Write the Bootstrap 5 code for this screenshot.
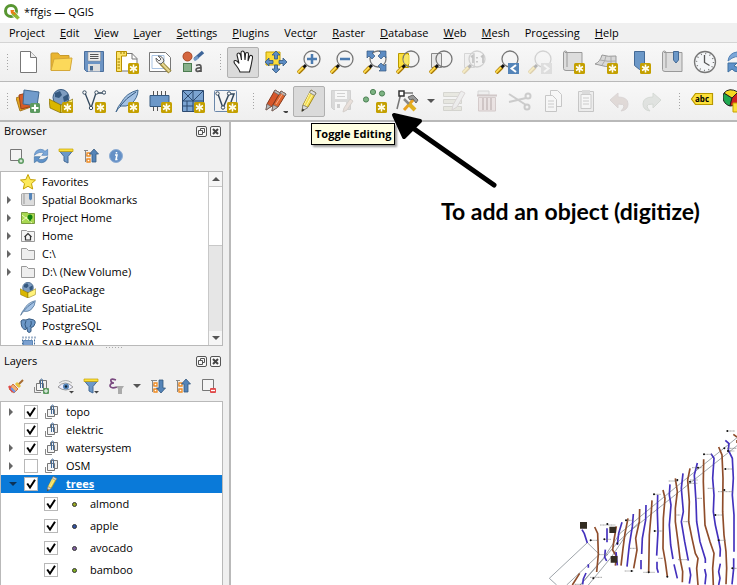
<!DOCTYPE html>
<html lang="en">
<head>
<meta charset="utf-8">
<meta name="viewport" content="width=device-width, initial-scale=1">
<title>*ffgis — QGIS</title>
<link href="https://cdn.jsdelivr.net/npm/bootstrap@5.3.0/dist/css/bootstrap.min.css" rel="stylesheet">
<style>
  :root { --edge: #b9b9b9; --face: #f0f0f0; }
  body { font: 11px/18px "Open Sans", "Noto Sans", sans-serif; color: #000; background: #fff; }
  button { color: inherit; }
  .titlebar { height: 23px; }
  .menubar { height: 20px; background: var(--face); border-bottom: 1px solid #d4d4d4; padding-left: 2px; gap: 1px; }
  .menubar button { border: 0; background: none; padding: 0 7px; }
  .toolstrip { height: 39px; gap: 1px; background: linear-gradient(#f8f8f8, #efefef); border-bottom: 1px solid var(--edge); overflow: hidden; }
  .toolstrip + .toolstrip { height: 40px; border-bottom-width: 2px; }
  .grip { width: 16px; height: 18px; flex: none; background: radial-gradient(circle, #a4a4a4 1px, transparent 1px) 0 0 / 3px 3px; background-clip: content-box; padding: 0 3px 0 8px; }
  .grip:first-child { width: 11px; padding: 0 1px 0 5px; }
  .tool { width: 32px; height: 31px; padding: 0; flex: none; display: flex; align-items: center; justify-content: center; border: 1px solid transparent; border-radius: 2px; background: none; }
  .tool svg { width: 24px; height: 24px; }
  .tool.held { background: #dadada; border-color: #b0b0b0; }
  .tool:disabled svg { opacity: .28; }
  .drop { width: 12px; height: 31px; padding: 0; border: 0; background: none; flex: none; }
  .tri { display: block; width: 0; height: 0; margin: auto; border: 4px solid transparent; border-top-color: #555; border-bottom: 0; }
  .tri.up { border-top: 0; border-bottom: 4px solid #555; }
  .tri.right { margin: 0; border: 4px solid transparent; border-left: 4px solid #666; border-right: 0; }
  .dock { width: 231px; background: var(--face); border-right: 2px solid var(--edge); }
  .dockhead { height: 18px; padding: 0 8px 0 4px; gap: 3px; }
  .dockhead h2 { font-size: 11px; line-height: 18px; }
  .dockhead button { width: 11px; height: 11px; padding: 0; border: 0; background: none; line-height: 0; }
  .dockhead svg { width: 11px; height: 11px; }
  .mini { height: 31px; padding-left: 8px; gap: 9px; }
  .mini button { width: 16px; height: 16px; padding: 0; border: 0; background: none; line-height: 0; }
  .mini svg { width: 16px; height: 16px; overflow: visible; }
  .mini .drop { width: 8px; }
  .pane { background: #fff; border: 1px solid var(--edge); margin-right: 6px; overflow: hidden; }
  .browsepane { height: 175px; }
  .rows { padding-top: 1px; }
  .branch { height: 18px; white-space: nowrap; }
  .branch .twist { width: 13px; flex: none; padding-left: 6px; }
  .browsepane .branch svg { width: 16px; height: 16px; margin: 0 6px; flex: none; }
  .scroller { width: 14px; border-left: 1px solid #c8c8c8; background: #e6e6e6; }
  .scroller button { height: 14px; padding: 0; border: 0; background: #f6f6f6; }
  .scroller i { height: 60px; background: #fff; border: 1px solid #c8c8c8; border-width: 1px 0; }
  .splitter { height: 6px; width: 122px; background: radial-gradient(circle, #aaa 1px, transparent 1px) 0 0 / 3px 3px; background-clip: content-box; padding: 1px 0 2px 105px; }
  .layerpane .twist { width: 23px; padding-left: 8px; }
  .layerpane svg { width: 16px; height: 16px; margin: 0 6px; flex: none; }
  .layerpane input { appearance: none; width: 14px; height: 14px; margin: 0; flex: none; border: 1px solid #b8b8b8; background: #fff; }
  .layerpane input:checked { background: #fff url("data:image/svg+xml,%3Csvg xmlns='http://www.w3.org/2000/svg' viewBox='0 0 12 12'%3E%3Cpath d='M2.2 5.5l2.8 4L10 1.8' fill='none' stroke='%23000' stroke-width='2'/%3E%3C/svg%3E"); }
  .branch.chosen { background: #0a7ad9; color: #fff; }
  .chosen .tri { border-top-color: #0b3358; }
  .leaf { height: 22px; padding-left: 43px; }
  .leaf .dot { width: 5px; height: 5px; border: 1px solid #333; border-radius: 50%; margin: 0 13px 0 14px; }
  .olive { background: #98a820; } .navy { background: #3050a0; } .violet { background: #8060a0; } .green { background: #80b020; }
  .canvas { background: #fff; overflow: visible; }
  .canvas svg { position: absolute; }
  .contours { right: 0; bottom: 0; width: 197px; height: 160px; }
  .pointer { left: 159px; top: -11px; width: 110px; height: 80px; }
  .hint { position: absolute; left: 80px; top: 1px; height: 22px; padding: 0 3px; border: 1px solid #000; background: #ffffe1; font-weight: 700; line-height: 20px; box-shadow: 2px 2px 2px #0006; white-space: nowrap; z-index: 2; }
  .note { position: absolute; left: 210px; top: 75px; font: 700 23px/28px Lato, "Open Sans", sans-serif; white-space: nowrap; }
</style>
<script src="https://cdn.jsdelivr.net/npm/bootstrap@5.3.0/dist/js/bootstrap.bundle.min.js"></script>
</head>
<body class="vh-100 overflow-hidden d-flex flex-column">
<svg class="d-none" aria-hidden="true">
  <defs>
    <linearGradient id="glass" x2="1" y2="1"><stop stop-color="#fff"/><stop offset="1" stop-color="#ccc"/></linearGradient>
    <linearGradient id="sky" x2="1" y2="1"><stop stop-color="#e8eef6"/><stop offset="1" stop-color="#7ba0c8"/></linearGradient>
  </defs>
  <symbol id="star" viewBox="0 0 24 24"><rect x="13" y="13" width="11" height="11" rx="1.500" fill="#c4a000"/><path d="M18.500 14.500v8M15 16.500l7 4M22 16.500l-7 4" stroke="#fff" stroke-width="1.500"/><circle cx="18.500" cy="18.500" r="2" fill="#fffbe0"/></symbol>
  <symbol id="lens" viewBox="0 0 24 24"><path d="M1 23l6-6" stroke="#a87800" stroke-width="4"/><path d="M1 22.500l6-6" stroke="#fcd94c" stroke-width="2"/><path d="M6.500 17.500l2.500-2.500" stroke="#111" stroke-width="3"/><circle cx="15" cy="9" r="8" fill="url(#glass)" fill-opacity=".85" stroke="#777" stroke-width="1.300"/></symbol>
  <symbol id="doc" viewBox="0 0 24 24"><path d="M4.500 1.500h10l6 6v15h-16z" fill="#fff" stroke="#777"/><path d="M14.500 1.500v6h6" fill="#eee" stroke="#777"/></symbol>
  <symbol id="open" viewBox="0 0 24 24"><path d="M2 20V4q0-1 1-1h6l2 2.500h9V9" fill="#eab530" stroke="#c79b2c"/><path d="M2 20.500L5 9l18-1-2 12.500z" fill="#fcd95a" stroke="#d5a838"/></symbol>
  <symbol id="save" viewBox="0 0 24 24"><path d="M2.500 1.500h19v20h-17l-2-2z" fill="#6c94c4" stroke="#4b6f9c"/><path d="M6 2h12.500v9H6z" fill="#eee" stroke="#888" stroke-width=".5"/><path d="M8 4.500h8.500M8 6.500h8.500M8 8.500h8.500" stroke="#555"/><path d="M6 14h12v7.500H6z" fill="#ddd"/><path d="M8 16h3v4.500H8z" fill="#46688f"/></symbol>
  <symbol id="layout" viewBox="0 0 24 24"><path d="M4 3.500h13l5 5V21H4z" fill="#fff" stroke="#777"/><path d="M17 3v6h5" fill="none" stroke="#777"/><path d="M1.500 1.500h10V6h-5v15.500h-5z" fill="#fce36a" stroke="#b89000"/><path d="M5 9H2.500M5 12H2.500M5 15H2.500M5 18H2.500M6 2v2M9 2v2" stroke="#9a7a00"/><use href="#star"/></symbol>
  <symbol id="manager" viewBox="0 0 24 24"><path d="M1.500 2.500h16l5 5v14h-21z" fill="#fff" stroke="#777"/><path d="M4 5.500h12v13H4z" fill="none" stroke="#a9c3e2"/><path d="M13 13l9 9" stroke="#9b8a40" stroke-width="4.500"/><path d="M13.500 13l8 8.500" stroke="#e8d890" stroke-width="2"/><path d="M8 8q0 5 5 6l3-3q-1-5-6-5l3 3-2 2z" fill="#eee" stroke="#666"/></symbol>
  <symbol id="style" viewBox="0 0 24 24"><circle cx="6.500" cy="6.500" r="4.500" fill="#d4663e" stroke="#a84522"/><path d="M14 9l8-7" stroke="#3d6599" stroke-width="3.500"/><path d="M13 10l4-3" stroke="#739bc8" stroke-width="3"/><rect x="2.500" y="13.500" width="8" height="8" fill="#88b08a" stroke="#4c7c50"/><path d="M15 15.500q5-2 5 1.500v5M20 18q-5-.5-5 2 0 2.500 5 .5" fill="none" stroke="#555" stroke-width="1.700"/></symbol>
  <symbol id="hand" viewBox="0 0 24 24"><path d="M9 22q-1-3-5-8-2-3 0-3.500 2-.5 4 3L6 5q0-2 1.500-2T9.500 5l1 5-.5-7q0-2 1.500-2T13.500 3l.5 7 .5-6q0-1.500 1.500-1.500T17.500 4l-.5 7 1.500-4.500q.5-1.500 2-1T21.500 8l-1.500 8-1.500 6z" fill="#fff" stroke="#222" stroke-width="1.100"/></symbol>
  <symbol id="pan" viewBox="0 0 24 24"><path d="M2 2h14v13H2z" fill="#fcdc3a" stroke="#c4a000"/><path d="M12 1l4 4h-2.500v4h-3V5H8zM12 23l-4-4h2.500v-4h3v4H16zM1 12l4-4v2.500h4v3H5V16zM23 12l-4 4v-2.500h-4v-3h4V8z" fill="#5c8cc4" stroke="#34587f" stroke-width=".8"/></symbol>
  <symbol id="zin" viewBox="0 0 24 24"><use href="#lens"/><path d="M15 4v10M10 9h10" stroke="#4b7bb0" stroke-width="2.500"/></symbol>
  <symbol id="zout" viewBox="0 0 24 24"><use href="#lens"/><path d="M10 9h10" stroke="#4b7bb0" stroke-width="2.500"/></symbol>
  <symbol id="zfull" viewBox="0 0 24 24"><use href="#lens"/><path d="M4 1h7L9 3l3 3-3 3-3-3-2 2zM23 1v7l-2-2-3 3-3-3 3-3-2-2zM23 21h-7l2-2-3-3 3-3 3 3 2-2z" fill="#5c8cc4" stroke="#34587f" stroke-width=".7"/></symbol>
  <symbol id="zsel" viewBox="0 0 24 24"><path d="M2.500 3.500h10v14h-10z" fill="#fce03a" stroke="#b89800"/><use href="#lens"/><path d="M9 5h5v9H9q-3-4 0-9z" fill="#f6e870" opacity=".8"/></symbol>
  <symbol id="zlayer" viewBox="0 0 24 24"><path d="M2.500 3.500h10v14h-10z" fill="#e8e8e8" stroke="#888"/><use href="#lens"/></symbol>
  <symbol id="znative" viewBox="0 0 24 24"><path d="M2.500 3.500h10v14h-10z" fill="#e8e8e8" stroke="#888"/><use href="#lens"/><path d="M9 7l2-1.500V13M21 13V5.500L19 7M15 7v1.500M15 11v1.500" fill="none" stroke="#444" stroke-width="1.700"/></symbol>
  <symbol id="zlast" viewBox="0 0 24 24"><use href="#lens"/><path d="M13 13h11v11H13z" fill="#5484b8"/><path d="M21 15l-4.500 3.500L21 22" fill="none" stroke="#fff" stroke-width="2"/></symbol>
  <symbol id="znext" viewBox="0 0 24 24"><use href="#lens"/><path d="M13 13h11v11H13z" fill="#aaa"/><path d="M16 15l4.500 3.500L16 22" fill="none" stroke="#fff" stroke-width="2"/></symbol>
  <symbol id="newmap" viewBox="0 0 24 24"><path d="M4 2.500h17v18H5q-2.500 0-2.500-2V3q0-2 2-2 1.500 0 1.500 2v14" fill="#ddd" stroke="#999"/><use href="#star"/></symbol>
  <symbol id="new3d" viewBox="0 0 24 24"><path d="M1 14q5-2 7-9 6 2 14 1v10q-10 2-21-2z" fill="#d8d8d8" stroke="#999"/><path d="M6 10q8 2 16 1M12 6q-1 6-4 9M17 6v10" fill="none" stroke="#aaa"/><use href="#star"/></symbol>
  <symbol id="newmark" viewBox="0 0 24 24"><path d="M7.500 1.500h10v19l-5-1-5-4z" fill="#6c98c8" stroke="#446a96"/><use href="#star"/></symbol>
  <symbol id="marks" viewBox="0 0 24 24"><path d="M4 2.500h18v19H5q-2.500 0-2.500-2V3q0-2 2-2 1.500 0 1.500 2v15" fill="#ddd" stroke="#999"/><path d="M13.500 1.500h5V10L16 13l-2.500-3z" fill="#6c98c8" stroke="#446a96"/></symbol>
  <symbol id="clock" viewBox="0 0 24 24"><circle cx="12" cy="12" r="10.500" fill="#f4f6f8" stroke="#777" stroke-width="1.300"/><circle cx="12" cy="12" r="8.500" fill="none" stroke="#777" stroke-width="1.500" stroke-dasharray="1 3.450"/><path d="M11.500 5v7.500l5 3" fill="none" stroke="#555" stroke-width="1.300"/></symbol>
  <symbol id="reload" viewBox="0 0 24 24"><path d="M2 11Q3 3 11 2q5 0 7 3l4-3v9h-9l3-3q-6-4-14 3z" fill="#7ba7d8" stroke="#4f7fb5"/><path d="M22 13q-1 8-9 9-5 0-7-3l-4 3v-9h9l-3 3q6 4 14-3z" fill="#5f92ca" stroke="#41719f"/></symbol>
  <symbol id="sources" viewBox="0 0 24 24"><path d="M0 9l10-4 5 13-11 4z" fill="#e5a820" stroke="#a97a20"/><path d="M3 6l11-3 3 14-12 3z" fill="#d55c28" stroke="#9d4219"/><path d="M8 1l15 2-2 14-14-2z" fill="#719bcb" stroke="#426890"/><rect x="14" y="14" width="10" height="10" rx="1.500" fill="#5c9a60"/><path d="M19 15.500v7M15.500 19h7" stroke="#fff" stroke-width="2"/></symbol>
  <symbol id="gpkg" viewBox="0 0 24 24"><circle cx="12" cy="8.500" r="8" fill="#7d9cc0" stroke="#34587f"/><path d="M6 4l5-2 2 4-3 3-4-1zM14 8l5-3v6l-4 2z" fill="#34587f"/><path d="M0 10l12 6v8L1 19z" fill="#d9b600" stroke="#806a00" stroke-width=".7"/><path d="M24 10l-12 6v8l11-5z" fill="#fff27a" stroke="#806a00" stroke-width=".7"/></symbol>
  <symbol id="newgpkg" viewBox="0 0 24 24"><use href="#gpkg"/><use href="#star"/></symbol>
  <symbol id="vee" viewBox="0 0 24 24"><path d="M3 4l6 15 5-15h8" fill="none" stroke="#34495e" stroke-width="1.300"/><g fill="#fff" stroke="#34495e"><circle cx="2.500" cy="3.500" r="1.700"/><circle cx="9" cy="19" r="1.700"/><circle cx="14.500" cy="3.500" r="1.700"/><circle cx="22" cy="3.500" r="1.700"/></g></symbol>
  <symbol id="newshp" viewBox="0 0 24 24"><use href="#vee"/><use href="#star"/></symbol>
  <symbol id="feather" viewBox="0 0 24 24"><path d="M1 23q2-6 5-9Q11 4 23 1q0 8-7 14-5 3-10 2-3 2-5 6z" fill="#a4c2e4" stroke="#446a90"/><path d="M5 17Q11 9 21 3" fill="none" stroke="#34587f"/></symbol>
  <symbol id="newlite" viewBox="0 0 24 24"><use href="#feather"/><use href="#star"/></symbol>
  <symbol id="chip" viewBox="0 0 24 24"><path d="M5.500 2v20M9.500 2v20M13.500 2v20M17.500 2v20" stroke="#555"/><path d="M2 6.500h19v11H2z" fill="#6c98c8" stroke="#34587f"/></symbol>
  <symbol id="newchip" viewBox="0 0 24 24"><use href="#chip"/><use href="#star"/></symbol>
  <symbol id="mesh" viewBox="0 0 24 24"><path d="M1.500 1.500h21v21h-21z" fill="#7ba4d2" stroke="#2c4a70"/><path d="M12 1v22M1 12h22M2 2l10 10L22 2M2 12L12 2M2 17h10M6 12v10" fill="none" stroke="#2c4a70"/><use href="#star"/></symbol>
  <symbol id="virtual" viewBox="0 0 24 24"><rect x=".5" y="1.500" width="22" height="21" rx="1" fill="url(#sky)" stroke="#6a87aa"/><path d="M4 5l5 14L15 5h5l-3 8" fill="none" stroke="#34495e" stroke-width="1.500"/><g fill="#fff" stroke="#34495e"><circle cx="3.500" cy="4.500" r="1.700"/><circle cx="9" cy="18.500" r="1.700"/><circle cx="15" cy="4.500" r="1.700"/></g><use href="#star"/></symbol>
  <symbol id="pencil" viewBox="0 0 24 24"><path d="M5 22l1-6L14 1l5 3-8 14z" fill="#f3dc50" stroke="#a48b20"/><path d="M13.500 2.500L7 16M16.500 3.500L9 17" stroke="#fff6a8"/><path d="M14 1l5 3-1.500 2.500-5-3zM5 22l1-6 5 2.500z" fill="#ddd" stroke="#777" stroke-width=".8"/><path d="M4.500 23l1-3.500 2 1.500z" fill="#333"/></symbol>
  <symbol id="edits" viewBox="0 0 24 24"><path d="M2 21l1-6L11 1l5 3-8 13z" fill="#d6562a" stroke="#86391c"/><path d="M8 22l1-6 8-14 5 3-8 13z" fill="#e0662f" stroke="#86391c"/><path d="M11 1l5 3-1 2-5-3zM17 2l5 3-1 2-5-3zM2 21l1-6 4 2.500zM8 22l1-6 5 2z" fill="#bbb" stroke="#666" stroke-width=".7"/><path d="M12 15l7-11" stroke="#f8a888"/><path d="M19 22h6l-3 3z" fill="#444"/></symbol>
  <symbol id="saveedits" viewBox="0 0 24 24"><path d="M1.500 1.500h19v19h-17l-2-2z" fill="#999" stroke="#777"/><path d="M5 2h12v8H5zM5 13h11v8H5z" fill="#fff"/><path d="M7 4.500h8M7 7.500h8" stroke="#777"/><path d="M7 15h3v4H7z" fill="#777"/><path d="M13 23l1-4 6-9 3 2-6 9z" fill="#d0b0a0" stroke="#876"/></symbol>
  <symbol id="addpt" viewBox="0 0 24 24"><g fill="#7db383" stroke="#4e8256"><circle cx="3" cy="10.500" r="2.600"/><circle cx="10" cy="3" r="2.600"/><circle cx="19" cy="4.500" r="2.600"/></g><use href="#star"/></symbol>
  <symbol id="vertex" viewBox="0 0 24 24"><path d="M1 20L5 4h12" fill="none" stroke="#777" stroke-width="1.500"/><path d="M3 2h5v5H3z" fill="#fff" stroke="#333" stroke-width="1.500"/><path d="M8 21L18 10" stroke="#e8a020" stroke-width="3"/><path d="M12 8l5-2 5 5-2 3-3-4-3 1z" fill="#999" stroke="#666"/><path d="M8 10l5 5" stroke="#888" stroke-width="2.500"/><path d="M13 15l6 6" stroke="#e0b020" stroke-width="4"/></symbol>
  <symbol id="attrs" viewBox="0 0 24 24"><path d="M1.500 3.500h18v4h-18zM1.500 10.500h18v4h-18zM1.500 17.500h18v4h-18z" fill="#c8c8b0" stroke="#887"/><path d="M10 21l1-5 8-14 4 2-8 14z" fill="#ddd" stroke="#988"/></symbol>
  <symbol id="bin" viewBox="0 0 24 24"><path d="M3 2h11v4H3z" fill="#ddd" stroke="#888"/><path d="M3.500 8.500h17V22h-17z" fill="#d6bcbc" stroke="#866"/><path d="M2 6.500h20M8 9v12M12 9v12M16 9v12" stroke="#755" stroke-width="2"/></symbol>
  <symbol id="cut" viewBox="0 0 24 24"><path d="M1 5l17 11M1 13l17-4" stroke="#666" stroke-width="2"/><g fill="none" stroke="#666" stroke-width="2"><circle cx="20" cy="7" r="2.500"/><circle cx="19" cy="18" r="2.500"/></g></symbol>
  <symbol id="copy" viewBox="0 0 24 24"><path d="M9.500 1.500h7l4 4v12h-11z" fill="#fff" stroke="#555"/><path d="M4.500 6.500h7l4 4v12h-11z" fill="#fff" stroke="#555"/><path d="M7 12h6M7 15h6M7 18h6" stroke="#666"/></symbol>
  <symbol id="paste" viewBox="0 0 24 24"><path d="M4.500 2.500h15v20h-15z" fill="#ddd" stroke="#555"/><path d="M7 5.500h10v14H7z" fill="#fff" stroke="#666"/><path d="M8 1h8v4H8z" fill="#999"/><path d="M9 9h6M9 12h6M9 15h6" stroke="#666"/></symbol>
  <symbol id="undo" viewBox="0 0 24 24"><path d="M3 11l8-7v4q10 0 10 7 0 6-7 7 3-3 3-5t-6-2v4z" fill="#b09890" stroke="#988"/></symbol>
  <symbol id="redo" viewBox="0 0 24 24"><path d="M21 11l-8-7v4Q3 8 3 15q0 6 7 7-3-3-3-5t6-2v4z" fill="#b0b8b0" stroke="#898"/></symbol>
  <symbol id="tag" viewBox="0 0 24 24"><path d="M1.500 10l4-5.500h17v11h-17z" fill="#fce03a" stroke="#b89800" stroke-width="1.200"/><text x="5" y="12.500" font-family="Open Sans" font-size="8" font-weight="700">abc</text></symbol>
  <symbol id="pie" viewBox="0 0 24 24"><path d="M9 9L1 4a9 9 0 0 0 6 13z" fill="#20a850" stroke="#222"/><path d="M9 9L1 4q5-6 14-1z" fill="#f4d820" stroke="#222"/><path d="M9 9l6-6q5 6 0 13l-8 1z" fill="#d02020" stroke="#222"/><path d="M10 14h5v9h-5z" fill="#fce03a" stroke="#c4a000"/></symbol>
  <symbol id="float" viewBox="0 0 11 11"><rect x=".5" y=".5" width="10" height="10" rx="1.500" fill="#f8f8f8" stroke="#555"/><path d="M4.500 4.500V2.500h4v4h-2M2.500 4.500h4v4h-4z" fill="none" stroke="#555"/></symbol>
  <symbol id="shut" viewBox="0 0 11 11"><rect x=".5" y=".5" width="10" height="10" rx="1.500" fill="#f8f8f8" stroke="#555"/><path d="M3 3l5 5M8 3L3 8" stroke="#444" stroke-width="2"/></symbol>
  <symbol id="boxplus" viewBox="0 0 16 16"><path d="M2.500 1.500h11v11h-11z" fill="#f4f4f4" stroke="#777"/><circle cx="13" cy="13" r="3" fill="#5c9a60"/><path d="M13 11.500v3M11.500 13h3" stroke="#fff"/></symbol>
  <symbol id="boxminus" viewBox="0 0 16 16"><path d="M2.500 1.500h11v11h-11z" fill="#f4f4f4" stroke="#777"/><rect x="10" y="10" width="6" height="5" rx="1" fill="#e04848"/><path d="M11 12.500h4" stroke="#fff" stroke-width="1.300"/></symbol>
  <symbol id="funnel" viewBox="0 0 16 16"><path d="M1.500 3h13L10 8.500V15l-4-2V8.500z" fill="#6c98c8" stroke="#446a96"/><path d="M1 1h14v2.500H1z" fill="#fce03a" stroke="#c4a000" stroke-width=".7"/></symbol>
  <symbol id="collapse" viewBox="0 0 16 16"><path d="M1 2.500h4M2.500 2v12M2.500 7h3M2.500 12h3" stroke="#888" fill="none"/><path d="M4 5h3v3H4zM4 11h3v3H4z" fill="#fff" stroke="#f08a20" stroke-width="1.300"/><path d="M11 1l4.500 5H13v8H9V6H6.500z" fill="#5484b8" stroke="#34587f" stroke-width=".8"/></symbol>
  <symbol id="expand" viewBox="0 0 16 16"><path d="M1 2.500h6M2.500 2v12M2.500 7h3M2.500 12h3" stroke="#888" fill="none"/><path d="M4 5h3v3H4zM4 11h3v3H4z" fill="#fff" stroke="#f08a20" stroke-width="1.300"/><path d="M11 15l-4.500-5H9V2h4v8h2.500z" fill="#5484b8" stroke="#34587f" stroke-width=".8"/></symbol>
  <symbol id="info" viewBox="0 0 16 16"><circle cx="8" cy="8" r="6.500" fill="#6590c6" stroke="#8faed4"/><path d="M7 7h2l-1 4.500h1.500M8.500 4v1.500" fill="none" stroke="#fff" stroke-width="1.500"/></symbol>
  <symbol id="brush" viewBox="0 0 16 16"><path d="M15 2L9 8" stroke="#a86c30" stroke-width="2"/><path d="M5 6l5 5-4 4-5-4z" fill="#f4b070" stroke="#cf7040"/><path d="M1 8l4 6" stroke="#e04848" stroke-width="2.500"/><path d="M3 10l4 4" stroke="#6c98e8" stroke-width="2"/><path d="M8 5l4 4" stroke="#e8c440" stroke-width="3"/></symbol>
  <symbol id="group" viewBox="0 0 16 16"><path d="M6.500 2.500h7v8h-7z" fill="#eee" stroke="#777"/><path d="M3.500 5.500h7v7h-7z" fill="#f4f4f4" stroke="#777"/><path d="M1.500 9v5.500H8" fill="none" stroke="#888"/><path d="M7.500 10V2.500q0-1.500 1-1.500t1 1.500V10" fill="none" stroke="#446a96"/></symbol>
  <symbol id="addgroup" viewBox="0 0 16 16"><use href="#group"/><rect x="10" y="10" width="6" height="6" rx="1" fill="#5c9a60"/><path d="M13 11v4M11 13h4" stroke="#fff"/></symbol>
  <symbol id="eye" viewBox="0 0 16 16"><path d="M0 9q7-8 15 0-7 6-15 0z" fill="#eef" stroke="#999"/><circle cx="8" cy="8.500" r="3" fill="#5484b8"/><circle cx="8" cy="8.500" r="1.200" fill="#123"/><path d="M1 5q7-5 13 0" fill="none" stroke="#aaa"/><path d="M11 13h5l-2.500 2.500z" fill="#444"/></symbol>
  <symbol id="filterleg" viewBox="0 0 16 16"><use href="#funnel"/><path d="M11 13h5l-2.500 2.500z" fill="#444"/></symbol>
  <symbol id="expr" viewBox="0 0 16 16"><path d="M8 2Q2 0 3 3q0 2 3 2-4 0-4 3 1 3 7 1" fill="none" stroke="#7a4a80" stroke-width="1.700"/><path d="M8 8h8l-2 3v5h-4v-5z" fill="#aaa"/></symbol>
  <symbol id="fav" viewBox="0 0 16 16"><path d="M8 .5l2.200 5 5.300.5-4 3.600 1.200 5.400L8 12.300 3.300 15l1.200-5.400L.5 6l5.300-.5z" fill="#fce95a" stroke="#c4a000"/></symbol>
  <symbol id="bmark" viewBox="0 0 16 16"><path d="M2.500 1.500h12v12H3q-1.500 0-1.500-1.500V2z" fill="#ddd" stroke="#aaa"/><path d="M4 2v10" stroke="#999"/><path d="M9 1h3v6l-1.500 1.500L9 7z" fill="#5484b8"/></symbol>
  <symbol id="projhome" viewBox="0 0 16 16"><path d="M1.500 2.500h6l1 1h6v10h-13z" fill="#a8d850" stroke="#7a9a40"/><path d="M2 5l10 8M2 11l5-4" stroke="#eef8c0"/><circle cx="10" cy="7" r="2.500" fill="#108010"/><path d="M8.500 8.500h3L10 12z" fill="#108010"/></symbol>
  <symbol id="home" viewBox="0 0 16 16"><path d="M1.500 2.500h5l1 1h7v10h-13z" fill="#f4f4f4" stroke="#999"/><path d="M4.500 9L8 5.500 11.500 9M5.500 8.500v3.500h5V8.500" fill="none" stroke="#333" stroke-width="1.200"/></symbol>
  <symbol id="folder" viewBox="0 0 16 16"><path d="M1.500 13.500v-11h5l2 2h6v9z" fill="#eee" stroke="#999"/></symbol>
  <symbol id="elephant" viewBox="0 0 16 16"><path d="M1 3q1-2 5-1 3-2 6-.500 4 .5 3 4-1 4-4 4v4q-2 2-3.500 0l-.5-4-1 2Q1 12 1 3z" fill="#6c98c8" stroke="#34587f"/><path d="M6 3q-2 3 0 7M11 3q1 3-1 6" fill="none" stroke="#34587f"/></symbol>
  <symbol id="hana" viewBox="0 0 16 16"><path d="M2.500 1.500h13M2 4.500h14M2 7.500h14M2 10.500h14" stroke="#446a96" stroke-width="2" stroke-dasharray="1 2"/><path d="M3.500 4.500h9v9h-9z" fill="#7ba0d0" stroke="#5c88b8"/></symbol>
</svg>

<header class="titlebar d-flex align-items-center flex-shrink-0">
  <svg class="ms-1 me-1" width="16" height="16" viewBox="0 0 16 16" aria-hidden="true"><circle cx="7" cy="7" r="5.500" fill="none" stroke="#589632" stroke-width="3"/><path d="M7.500 7.500h3.500l5 6-2.500 2.500-6-5z" fill="#8fb832" stroke="#fff" stroke-width=".7"/><path d="M6.500 6h4l-1 1.500L12 10l-1.500 1L8.500 9 7 10z" fill="#ee7913"/></svg>
  <span>*ffgis — QGIS</span>
</header>

<nav class="menubar d-flex align-items-center flex-shrink-0" aria-label="Main menu">
  <button>Pro<u>j</u>ect</button><button><u>E</u>dit</button><button><u>V</u>iew</button><button><u>L</u>ayer</button><button><u>S</u>ettings</button><button><u>P</u>lugins</button><button>Vect<u>o</u>r</button><button><u>R</u>aster</button><button><u>D</u>atabase</button><button><u>W</u>eb</button><button><u>M</u>esh</button><button>Pro<u>c</u>essing</button><button><u>H</u>elp</button>
</nav>

<div class="toolstrip d-flex align-items-center flex-shrink-0" role="toolbar" aria-label="Project and navigation">
  <span class="grip"></span>
  <button class="tool" aria-label="New project"><svg><use href="#doc"/></svg></button>
  <button class="tool" aria-label="Open project"><svg><use href="#open"/></svg></button>
  <button class="tool" aria-label="Save project"><svg><use href="#save"/></svg></button>
  <button class="tool" aria-label="New print layout"><svg><use href="#layout"/></svg></button>
  <button class="tool" aria-label="Layout manager"><svg><use href="#manager"/></svg></button>
  <button class="tool" aria-label="Style manager"><svg><use href="#style"/></svg></button>
  <span class="grip"></span>
  <button class="tool held" aria-label="Pan map" aria-pressed="true"><svg><use href="#hand"/></svg></button>
  <button class="tool" aria-label="Pan to selection"><svg><use href="#pan"/></svg></button>
  <button class="tool" aria-label="Zoom in"><svg><use href="#zin"/></svg></button>
  <button class="tool" aria-label="Zoom out"><svg><use href="#zout"/></svg></button>
  <button class="tool" aria-label="Zoom full"><svg><use href="#zfull"/></svg></button>
  <button class="tool" aria-label="Zoom to selection"><svg><use href="#zsel"/></svg></button>
  <button class="tool" aria-label="Zoom to layer"><svg><use href="#zlayer"/></svg></button>
  <button class="tool" disabled aria-label="Zoom to native resolution"><svg><use href="#znative"/></svg></button>
  <button class="tool" aria-label="Zoom last"><svg><use href="#zlast"/></svg></button>
  <button class="tool" disabled aria-label="Zoom next"><svg><use href="#znext"/></svg></button>
  <button class="tool" aria-label="New map view"><svg><use href="#newmap"/></svg></button>
  <button class="tool" aria-label="New 3D map view"><svg><use href="#new3d"/></svg></button>
  <button class="tool" aria-label="New spatial bookmark"><svg><use href="#newmark"/></svg></button>
  <button class="tool" aria-label="Show spatial bookmarks"><svg><use href="#marks"/></svg></button>
  <button class="tool" aria-label="Temporal controller"><svg><use href="#clock"/></svg></button>
  <button class="tool" aria-label="Refresh"><svg><use href="#reload"/></svg></button>
</div>

<div class="toolstrip d-flex align-items-center flex-shrink-0" role="toolbar" aria-label="Layers and digitizing">
  <span class="grip"></span>
  <button class="tool" aria-label="Data source manager"><svg><use href="#sources"/></svg></button>
  <button class="tool" aria-label="New GeoPackage layer"><svg><use href="#newgpkg"/></svg></button>
  <button class="tool" aria-label="New shapefile layer"><svg><use href="#newshp"/></svg></button>
  <button class="tool" aria-label="New SpatiaLite layer"><svg><use href="#newlite"/></svg></button>
  <button class="tool" aria-label="New scratch layer"><svg><use href="#newchip"/></svg></button>
  <button class="tool" aria-label="New mesh layer"><svg><use href="#mesh"/></svg></button>
  <button class="tool" aria-label="New virtual layer"><svg><use href="#virtual"/></svg></button>
  <span class="grip"></span>
  <button class="tool" aria-label="Current edits"><svg><use href="#edits"/></svg></button>
  <button class="tool held" aria-label="Toggle editing" aria-pressed="true"><svg><use href="#pencil"/></svg></button>
  <button class="tool" disabled aria-label="Save layer edits"><svg><use href="#saveedits"/></svg></button>
  <button class="tool" aria-label="Add point feature"><svg><use href="#addpt"/></svg></button>
  <button class="tool" aria-label="Vertex tool"><svg><use href="#vertex"/></svg></button>
  <button class="drop" aria-label="Vertex tool options"><span class="tri"></span></button>
  <button class="tool" disabled aria-label="Modify attributes"><svg><use href="#attrs"/></svg></button>
  <button class="tool" disabled aria-label="Delete selected"><svg><use href="#bin"/></svg></button>
  <button class="tool" disabled aria-label="Cut features"><svg><use href="#cut"/></svg></button>
  <button class="tool" disabled aria-label="Copy features"><svg><use href="#copy"/></svg></button>
  <button class="tool" disabled aria-label="Paste features"><svg><use href="#paste"/></svg></button>
  <button class="tool" disabled aria-label="Undo"><svg><use href="#undo"/></svg></button>
  <button class="tool" disabled aria-label="Redo"><svg><use href="#redo"/></svg></button>
  <span class="grip"></span>
  <button class="tool" aria-label="Layer labeling"><svg><use href="#tag"/></svg></button>
  <button class="tool" aria-label="Layer diagrams"><svg><use href="#pie"/></svg></button>
</div>

<div class="d-flex flex-grow-1 overflow-visible">
  <aside class="dock d-flex flex-column flex-shrink-0">
    <div class="dockhead d-flex align-items-center flex-shrink-0"><h2 class="m-0 me-auto fw-normal">Browser</h2><button aria-label="Float browser"><svg><use href="#float"/></svg></button><button aria-label="Close browser"><svg><use href="#shut"/></svg></button></div>
    <div class="mini d-flex align-items-center flex-shrink-0">
      <button aria-label="Add selected layers"><svg><use href="#boxplus"/></svg></button>
      <button aria-label="Refresh"><svg><use href="#reload"/></svg></button>
      <button aria-label="Filter browser"><svg><use href="#funnel"/></svg></button>
      <button aria-label="Collapse all"><svg><use href="#collapse"/></svg></button>
      <button aria-label="Properties"><svg><use href="#info"/></svg></button>
    </div>
    <div class="pane browsepane d-flex flex-shrink-0">
      <div class="rows flex-grow-1">
        <div class="branch d-flex align-items-center"><span class="twist"></span><svg><use href="#fav"/></svg>Favorites</div>
        <div class="branch d-flex align-items-center"><span class="twist"><i class="tri right"></i></span><svg><use href="#bmark"/></svg>Spatial Bookmarks</div>
        <div class="branch d-flex align-items-center"><span class="twist"><i class="tri right"></i></span><svg><use href="#projhome"/></svg>Project Home</div>
        <div class="branch d-flex align-items-center"><span class="twist"><i class="tri right"></i></span><svg><use href="#home"/></svg>Home</div>
        <div class="branch d-flex align-items-center"><span class="twist"><i class="tri right"></i></span><svg><use href="#folder"/></svg>C:\</div>
        <div class="branch d-flex align-items-center"><span class="twist"><i class="tri right"></i></span><svg><use href="#folder"/></svg>D:\ (New Volume)</div>
        <div class="branch d-flex align-items-center"><span class="twist"></span><svg><use href="#gpkg"/></svg>GeoPackage</div>
        <div class="branch d-flex align-items-center"><span class="twist"></span><svg><use href="#feather"/></svg>SpatiaLite</div>
        <div class="branch d-flex align-items-center"><span class="twist"></span><svg><use href="#elephant"/></svg>PostgreSQL</div>
        <div class="branch d-flex align-items-center"><span class="twist"></span><svg><use href="#hana"/></svg>SAP HANA</div>
      </div>
      <div class="scroller d-flex flex-column flex-shrink-0"><button aria-label="Scroll up"><span class="tri up"></span></button><i></i><button class="mt-auto" aria-label="Scroll down"><span class="tri"></span></button></div>
    </div>
    <div class="splitter flex-shrink-0"></div>
    <div class="dockhead d-flex align-items-center flex-shrink-0"><h2 class="m-0 me-auto fw-normal">Layers</h2><button aria-label="Float layers"><svg><use href="#float"/></svg></button><button aria-label="Close layers"><svg><use href="#shut"/></svg></button></div>
    <div class="mini d-flex align-items-center flex-shrink-0">
      <button aria-label="Layer styling"><svg><use href="#brush"/></svg></button>
      <button aria-label="Add group"><svg><use href="#addgroup"/></svg></button>
      <button aria-label="Map themes"><svg><use href="#eye"/></svg></button>
      <button aria-label="Filter legend"><svg><use href="#filterleg"/></svg></button>
      <button aria-label="Filter by expression"><svg><use href="#expr"/></svg></button>
      <button class="drop" aria-label="Expression options"><span class="tri"></span></button>
      <button aria-label="Expand all"><svg><use href="#expand"/></svg></button>
      <button aria-label="Collapse all"><svg><use href="#collapse"/></svg></button>
      <button aria-label="Remove layer"><svg><use href="#boxminus"/></svg></button>
    </div>
    <div class="pane rows layerpane flex-grow-1 border-bottom-0">
      <div class="branch d-flex align-items-center"><span class="twist"><i class="tri right"></i></span><input type="checkbox" id="l1" checked><svg><use href="#group"/></svg><label for="l1">topo</label></div>
      <div class="branch d-flex align-items-center"><span class="twist"></span><input type="checkbox" id="l2" checked><svg><use href="#group"/></svg><label for="l2">elektric</label></div>
      <div class="branch d-flex align-items-center"><span class="twist"><i class="tri right"></i></span><input type="checkbox" id="l3" checked><svg><use href="#group"/></svg><label for="l3">watersystem</label></div>
      <div class="branch d-flex align-items-center"><span class="twist"><i class="tri right"></i></span><input type="checkbox" id="l4"><svg><use href="#group"/></svg><label for="l4">OSM</label></div>
      <div class="branch chosen d-flex align-items-center"><span class="twist"><i class="tri m-0"></i></span><input type="checkbox" id="l5" checked><svg><use href="#pencil"/></svg><label for="l5" class="fw-bold text-decoration-underline">trees</label></div>
      <div class="leaf d-flex align-items-center"><input type="checkbox" id="t1" checked><i class="dot olive"></i><label for="t1">almond</label></div>
      <div class="leaf d-flex align-items-center"><input type="checkbox" id="t2" checked><i class="dot navy"></i><label for="t2">apple</label></div>
      <div class="leaf d-flex align-items-center"><input type="checkbox" id="t3" checked><i class="dot violet"></i><label for="t3">avocado</label></div>
      <div class="leaf d-flex align-items-center"><input type="checkbox" id="t4" checked><i class="dot green"></i><label for="t4">bamboo</label></div>
    </div>
  </aside>

  <main class="canvas flex-grow-1 position-relative">
    <svg class="contours" viewBox="0 0 591 480" role="img" aria-label="Contour map">
      <g fill="none" stroke="#8a9299" stroke-width="2.500">
        <path d="M50 480L28 460 142 353 178 388 80 480M120 480L190 400 240 325 430 168 591 38M145 480L215 395 262 325 340 262 591 62M130 470L205 385 235 350 300 290"/>
      </g>
      <g fill="none" stroke="#8f4d2b" stroke-width="5">
        <path d="M164 306L173 325 175 388 170 441M119 445L97 480M229 304L222 345 218 375 230 395 226 422M264 280L255 325 249 370 243 422M299 252L298 290 287 340 291 375 281 430M336 226L334 260 328 330 326 442M369 195L375 220 370 280 369 370 376 410 382 455M406 160L412 200 406 250 406 290 414 350 420 400 428 440 427 472M450 130L443 165 448 230 446 290 456 340 466 385 474 400 470 430 474 480M491 103L490 170 492 230 495 300 510 350 522 385 518 430 520 480M536 66L546 90 549 160 548 260 552 330 558 380 560 430 558 478M580 28L591 36M591 45V54"/>
      </g>
      <g fill="none" stroke="#4331bd" stroke-width="5">
        <path d="M126 314L133 326 142 354M201 310V352M196 374L194 396 200 408M246 292L236 325 232 360M228 381L232 421M145 418V428M138 444L130 462 128 478M280 267L277 305 268 360 261 425M318 240L317 285 307 340 305 387M303 405V433M353 210L352 260 354 320 350 392M351 410V430L355 443M390 178L388 210 393 240 388 300 392 360 399 402M402 418L412 460M429 145L424 190 430 260 424 290 434 350 445 407M448 427L452 450 448 476M472 114L463 150 468 230 470 290 480 350 496 402V414M494 432L498 450 495 478M513 86L522 100 518 160 522 210 520 260 526 300 536 345 541 372 540 395M541 416L536 440 540 460 536 480M556 46L567 56 565 75 577 100 580 160 577 210 582 270V380M581 400V430L576 478"/>
      </g>
      <g fill="none" stroke="#777" stroke-width="2" stroke-dasharray="4 1 2 1">
        <path d="M562 18h24M492 88h24M342 208h20M258 286h22M180 300h46M152 346h24M254 438h26M310 442h34M344 318h26M386 168h28M526 270h24M534 200h44M556 132h24M456 128h30M450 165h24M450 175h22M536 346h22M561 70h28M561 78h22M577 430h14M150 457h36M104 478h24M193 343h20M176 389h28M270 370h20M414 404h30M430 290h20M466 220h20M406 270h16M355 400h14M503 190h20"/>
      </g>
      <g fill="none" stroke="#111" stroke-width="6" stroke-linecap="round">
        <path d="M562 18h0M492 88h0M342 208h0M258 286h0M202 297h0M152 346h0M275 438h0M326 442h0M344 318h0M412 165h0M526 270h0M553 195h0M556 132h0M474 128h0M450 170h0M536 346h0M577 430h0M160 460h0M232 355h0M193 343h0M564 78h0M553 70h0M382 455h0"/>
      </g>
      <path d="M120 291h21v20h-21zM208 305h20v19h-20zM212 393h20v20h-20z" fill="#332d22"/>
    </svg>
    <svg class="pointer" viewBox="0 0 110 80" aria-hidden="true"><path d="M20 15L104 74" stroke="#000" stroke-width="5" stroke-linecap="round"/><path d="M4 4L30 10 14 26z" stroke="#000" stroke-width="4" stroke-linejoin="round"/></svg>
    <div class="hint" role="tooltip">Toggle Editing</div>
    <div class="note">To add an object (digitize)</div>
  </main>
</div>
</body>
</html>
